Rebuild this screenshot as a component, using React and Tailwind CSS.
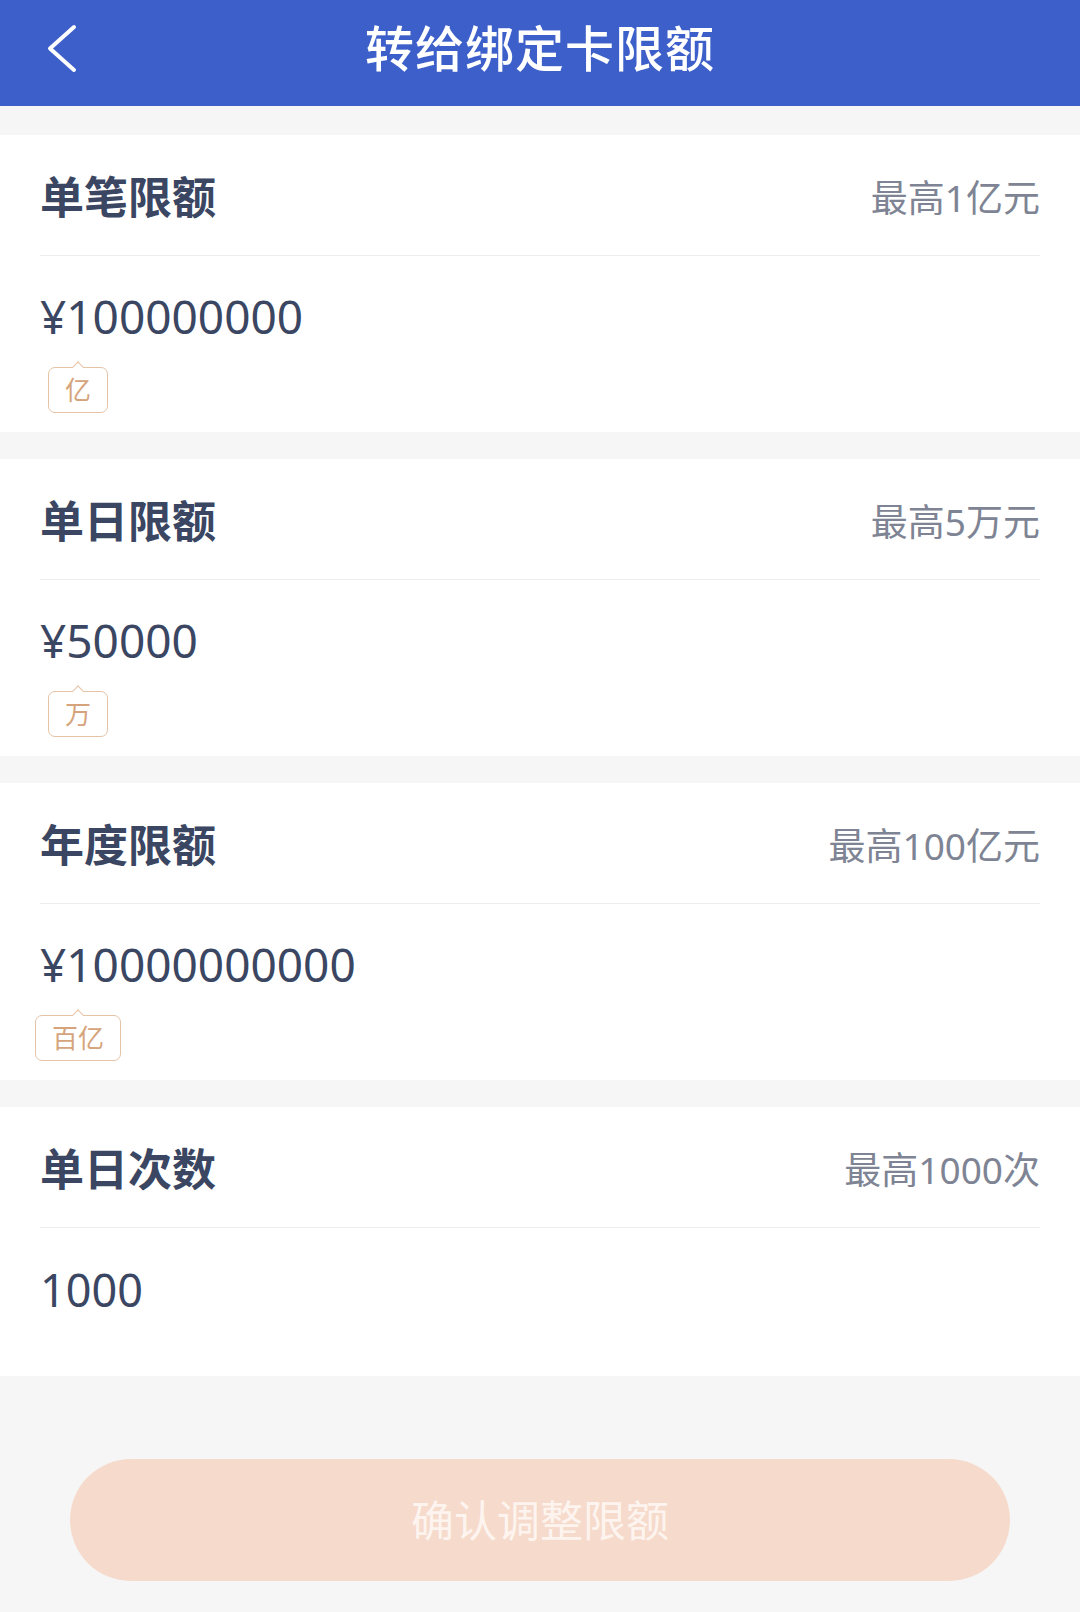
import React from "react";

const font = { fontFamily: '"Noto Sans", "Noto Sans CJK SC", sans-serif' };

function Badge({ label }) {
  return (
    <div className="w-[76px] flex justify-center mt-[26px]">
      <div className="relative shrink-0 h-[46px] px-[16px] flex items-center justify-center rounded-[7px] border border-[#e6c3a5] bg-white">
        <div className="absolute left-1/2 -top-[5px] -ml-[4px] w-[8px] h-[8px] rotate-45 border-l border-t border-[#e6c3a5] bg-white" />
        <span className="relative text-[26px] leading-none text-[#d6a47c] whitespace-nowrap">{label}</span>
      </div>
    </div>
  );
}

function Card({ title, max, value, badge }) {
  return (
    <div className="bg-white px-[40px]">
      <div className="h-[120px] flex items-center justify-between pt-[4px]">
        <span className="text-[44px] font-bold text-[#3a4662] leading-none">{title}</span>
        <span className="text-[37px] text-[#7e8494] leading-none">{max}</span>
      </div>
      <div className="h-px bg-[#ededed]" />
      {badge ? (
        <div className="h-[176px] pt-[35px]">
          <div className="h-[50px] flex items-center text-[46px] leading-none text-[#3a4662]">{value}</div>
          <Badge label={badge} />
        </div>
      ) : (
        <div className="h-[148px] pt-[36px]">
          <div className="h-[50px] flex items-center text-[45px] leading-none text-[#3a4662]">{value}</div>
        </div>
      )}
    </div>
  );
}

export default function App() {
  return (
    <div style={font} className="w-[1080px] h-[1612px] bg-[#f6f6f6] flex flex-col overflow-hidden">
      <div className="h-[106px] bg-[#3c5fc9] grid grid-cols-[1fr_auto_1fr] items-center shrink-0">
        <div className="pl-[46px] pb-[8px] flex items-center">
          <svg width="32" height="52" viewBox="0 0 32 52" fill="none">
            <path d="M28 4 L4 25.5 L28 47" stroke="white" strokeWidth="4" strokeLinecap="round" strokeLinejoin="round" />
          </svg>
        </div>
        <div className="text-white text-[49px] font-medium leading-none pb-[10px] tracking-[1px]">转给绑定卡限额</div>
        <div />
      </div>
      <div className="pt-[29px] flex flex-col gap-[27px]">
        <Card title="单笔限额" max="最高1亿元" value="¥100000000" badge="亿" />
        <Card title="单日限额" max="最高5万元" value="¥50000" badge="万" />
        <Card title="年度限额" max="最高100亿元" value="¥10000000000" badge="百亿" />
        <Card title="单日次数" max="最高1000次" value="1000" />
      </div>
      <div className="px-[70px] mt-[83px]">
        <button className="w-full h-[122px] rounded-full bg-[#f6dacb] text-[#fdf4ef] text-[43px] leading-none flex items-center justify-center">
          确认调整限额
        </button>
      </div>
    </div>
  );
}
